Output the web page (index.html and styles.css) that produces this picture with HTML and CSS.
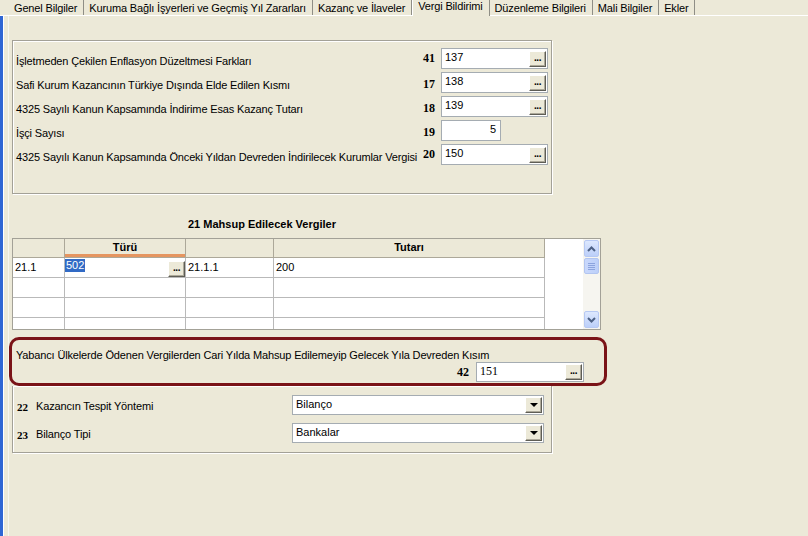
FILE: index.html
```html
<!DOCTYPE html>
<html lang="tr">
<head>
<meta charset="utf-8">
<title>Vergi Bildirimi</title>
<link rel="stylesheet" href="styles.css">
</head>
<body>
<div class="window">
  <div class="tabbar">
    <div class="tab">Genel Bilgiler</div>
    <div class="tab">Kuruma Bağlı İşyerleri ve Geçmiş Yıl Zararları</div>
    <div class="tab">Kazanç ve İlaveler</div>
    <div class="tab tab-active">Vergi Bildirimi</div>
    <div class="tab">Düzenleme Bilgileri</div>
    <div class="tab">Mali Bilgiler</div>
    <div class="tab">Ekler</div>
  </div>
  <div class="frame">
    <div class="panel">
      <div class="group group-top">
        <div class="frow">
          <span class="flabel">İşletmeden Çekilen Enflasyon Düzeltmesi Farkları</span>
          <span class="code">41</span>
          <div class="field"><span class="fval">137</span><span class="ebtn">...</span></div>
        </div>
        <div class="frow">
          <span class="flabel">Safi Kurum Kazancının Türkiye Dışında Elde Edilen Kısmı</span>
          <span class="code code-low">17</span>
          <div class="field"><span class="fval">138</span><span class="ebtn">...</span></div>
        </div>
        <div class="frow">
          <span class="flabel">4325 Sayılı Kanun Kapsamında İndirime Esas Kazanç Tutarı</span>
          <span class="code code-low">18</span>
          <div class="field"><span class="fval">139</span><span class="ebtn">...</span></div>
        </div>
        <div class="frow">
          <span class="flabel">İşçi Sayısı</span>
          <span class="code code-low">19</span>
          <div class="field field-short"><span class="fval">5</span></div>
        </div>
        <div class="frow">
          <span class="flabel">4325 Sayılı Kanun Kapsamında Önceki Yıldan Devreden İndirilecek Kurumlar Vergisi</span>
          <span class="code">20</span>
          <div class="field"><span class="fval">150</span><span class="ebtn">...</span></div>
        </div>
      </div>

      <div class="grid-title">21 Mahsup Edilecek Vergiler</div>
      <div class="grid">
        <div class="gtable">
          <div class="gh"></div>
          <div class="gh gh-hot">Türü</div>
          <div class="gh"></div>
          <div class="gh">Tutarı</div>
          <div class="gfill"></div>

          <div class="gc">21.1</div>
          <div class="gc gc-edit"><span class="sel">502</span><span class="ebtn ebtn-cell">...</span></div>
          <div class="gc">21.1.1</div>
          <div class="gc">200</div>
          <div class="gfill"></div>

          <div class="gc"></div><div class="gc"></div><div class="gc"></div><div class="gc"></div><div class="gfill"></div>
          <div class="gc"></div><div class="gc"></div><div class="gc"></div><div class="gc"></div><div class="gfill"></div>
          <div class="gc"></div><div class="gc"></div><div class="gc"></div><div class="gc"></div><div class="gfill"></div>
        </div>
        <div class="vscroll">
          <div class="sbtn"><svg width="9" height="6" viewBox="0 0 9 6"><path d="M1 5 L4.5 1.5 L8 5" fill="none" stroke="#4d6185" stroke-width="2"/></svg></div>
          <div class="sthumb"><span></span><span></span><span></span><span></span></div>
          <div class="strack"></div>
          <div class="sbtn"><svg width="9" height="6" viewBox="0 0 9 6"><path d="M1 1 L4.5 4.5 L8 1" fill="none" stroke="#4d6185" stroke-width="2"/></svg></div>
        </div>
      </div>

      <div class="highlight">
        <div class="hl-label">Yabancı Ülkelerde Ödenen Vergilerden Cari Yılda Mahsup Edilemeyip Gelecek Yıla Devreden Kısım</div>
        <div class="hl-row">
          <span class="code">42</span>
          <div class="field"><span class="fval fval-serif">151</span><span class="ebtn">...</span></div>
        </div>
      </div>

      <div class="group group-bottom">
        <div class="crow">
          <span class="code code-left">22</span>
          <span class="flabel">Kazancın Tespit Yöntemi</span>
          <div class="combo"><span>Bilanço</span><span class="cbtn"><span class="tri"></span></span></div>
        </div>
        <div class="crow">
          <span class="code code-left">23</span>
          <span class="flabel">Bilanço Tipi</span>
          <div class="combo"><span>Bankalar</span><span class="cbtn"><span class="tri"></span></span></div>
        </div>
      </div>
    </div>
  </div>
</div>
</body>
</html>
```

FILE: styles.css
```css
* { box-sizing: border-box; }

body {
  margin: 0;
  width: 808px;
  height: 536px;
  overflow: hidden;
  background: #ECE9D8;
  color: #000;
  font-family: "Liberation Sans", Arial, sans-serif;
  font-size: 11px;
}

.window {
  height: 536px;
  display: flex;
  flex-direction: column;
}

/* ---------- tabs ---------- */
.tabbar {
  display: flex;
  height: 16px;
  padding-left: 9px;
  border-bottom: 1px solid #fff;
}

.tab {
  padding: 2px 6px 0 5px;
  line-height: 12px;
  white-space: nowrap;
  letter-spacing: -0.15px;
  border-right: 1px solid #8f8e86;
}

.tab-active {
  padding-top: 0;
  border-left: 1px solid #fff;
  height: 16px;
  margin-bottom: -1px;
  background: #ECE9D8;
}

/* ---------- frame ---------- */
.frame {
  flex: 1;
  border-left: 3px solid #2f66d4;
  box-shadow: inset 1px 0 0 #fff;
  padding-left: 5px;
  display: flex;
}

.panel {
  flex: 1;
  border-left: 1px solid #f7f6f0;
  padding-top: 24px;
}

/* ---------- group boxes ---------- */
.group {
  margin-left: 3px;
  width: 540px;
  border: 1px solid #a3a197;
  box-shadow: inset 1px 1px 0 #fff, 1px 1px 0 #fff;
}

.group-top {
  display: flex;
  flex-direction: column;
  gap: 3px;
  padding: 7px 3px 28px 3px;
}

.frow {
  display: flex;
  align-items: center;
  height: 21px;
}

.flabel {
  flex: 1;
  white-space: nowrap;
  letter-spacing: -0.15px;
}

.frow .flabel {
  padding-top: 4px;
}

.code {
  font-family: "Liberation Serif", "Times New Roman", serif;
  font-weight: bold;
  font-size: 12px;
  margin-right: 6px;
}

.code-low {
  padding-top: 4px;
}

.field {
  width: 107px;
  height: 21px;
  border: 1px solid #a5acb2;
  background: #fff;
  display: flex;
  align-items: center;
  justify-content: space-between;
  padding: 0 1px 0 3px;
}

.field-short {
  width: 60px;
  justify-content: flex-end;
  padding-right: 4px;
  margin-right: 47px;
}

.fval {
  line-height: 14px;
  margin-top: -3px;
}

.fval-serif {
  font-family: "Liberation Serif", "Times New Roman", serif;
  font-size: 12px;
}

.ebtn {
  width: 17px;
  height: 16px;
  background: #ECE9D8;
  border: 1px solid;
  border-color: #fff #5e5d55 #5e5d55 #fff;
  box-shadow: inset -1px -1px 0 #aca899;
  font-weight: bold;
  font-size: 10px;
  line-height: 12px;
  text-align: center;
  letter-spacing: -0.5px;
}

/* ---------- grid ---------- */
.grid-title {
  margin: 22px 0 6px 179px;
  font-weight: bold;
  line-height: 16px;
}

.grid {
  margin-left: 3px;
  width: 589px;
  height: 92px;
  border: 1px solid #a3a197;
  display: flex;
}

.gtable {
  flex: 1;
  display: grid;
  grid-template-columns: 52px 121px 88px 271px 1fr;
  grid-template-rows: 19px;
  grid-auto-rows: 20px;
  align-content: start;
  overflow: hidden;
  background: #fff;
}

.gh {
  background: #ECE9D8;
  border-right: 1px solid #aca899;
  border-bottom: 1px solid #aca899;
  font-weight: bold;
  text-align: center;
  line-height: 17px;
}

.gh-hot {
  box-shadow: inset 0 -3px 0 #e59560;
}

.gfill {
  background: #fff;
}

.gc {
  border-right: 1px solid #b9b9b9;
  border-bottom: 1px solid #b9b9b9;
  padding-left: 2px;
  line-height: 19px;
  white-space: nowrap;
}

.gc-edit {
  padding-left: 0;
  display: flex;
  justify-content: space-between;
}

.sel {
  align-self: flex-start;
  background: #316ac5;
  color: #fff;
  line-height: 13px;
  padding: 0 1px;
  margin-top: 1px;
}

.ebtn-cell {
  align-self: flex-end;
}

.vscroll {
  width: 17px;
  background: #f6f5f0;
  display: flex;
  flex-direction: column;
  padding: 1px;
}

.sbtn {
  height: 17px;
  border: 1px solid #b7c9f3;
  border-radius: 2px;
  background: linear-gradient(#dde8fe, #bccff9);
  display: flex;
  align-items: center;
  justify-content: center;
}

.sthumb {
  margin-top: 1px;
  height: 16px;
  border: 1px solid #b2c5f0;
  border-radius: 2px;
  background: linear-gradient(90deg, #c9d8fc, #bccff9);
  display: flex;
  flex-direction: column;
  align-items: center;
  justify-content: center;
  gap: 1px;
}

.sthumb span {
  width: 7px;
  height: 1px;
  background: #8ca4de;
}

.strack {
  flex: 1;
}

/* ---------- highlighted row ---------- */
.highlight {
  margin-top: 7px;
  width: 598px;
  border: 3px solid #7a1317;
  border-radius: 10px;
  padding: 8px 20px 1px 4px;
}

.hl-label {
  line-height: 14px;
  white-space: nowrap;
  letter-spacing: -0.15px;
}

.hl-row {
  display: flex;
  justify-content: flex-end;
  align-items: center;
}

.hl-row .field {
  height: 20px;
  width: 108px;
}

.hl-row .code {
  margin-right: 7px;
}

/* ---------- bottom group ---------- */
.group-bottom {
  border-top: none;
  display: flex;
  flex-direction: column;
  gap: 8px;
  padding: 9px 7px 9px 4px;
}

.crow {
  display: flex;
  align-items: center;
  height: 20px;
}

.code-left {
  width: 19px;
  margin-right: 0;
  font-size: 11px;
  padding-top: 4px;
}

.crow .flabel {
  padding-top: 2px;
}

.combo {
  width: 252px;
  height: 20px;
  border: 1px solid #a5acb2;
  background: #fff;
  display: flex;
  align-items: center;
  justify-content: space-between;
  padding: 0 1px 0 3px;
}

.combo > span:first-child {
  margin-top: -3px;
}

.cbtn {
  width: 17px;
  height: 16px;
  background: #ECE9D8;
  border: 1px solid;
  border-color: #fff #5e5d55 #5e5d55 #fff;
  box-shadow: inset -1px -1px 0 #aca899;
  display: flex;
  align-items: center;
  justify-content: center;
}

.tri {
  width: 0;
  height: 0;
  border-left: 4px solid transparent;
  border-right: 4px solid transparent;
  border-top: 4px solid #000;
}
```
